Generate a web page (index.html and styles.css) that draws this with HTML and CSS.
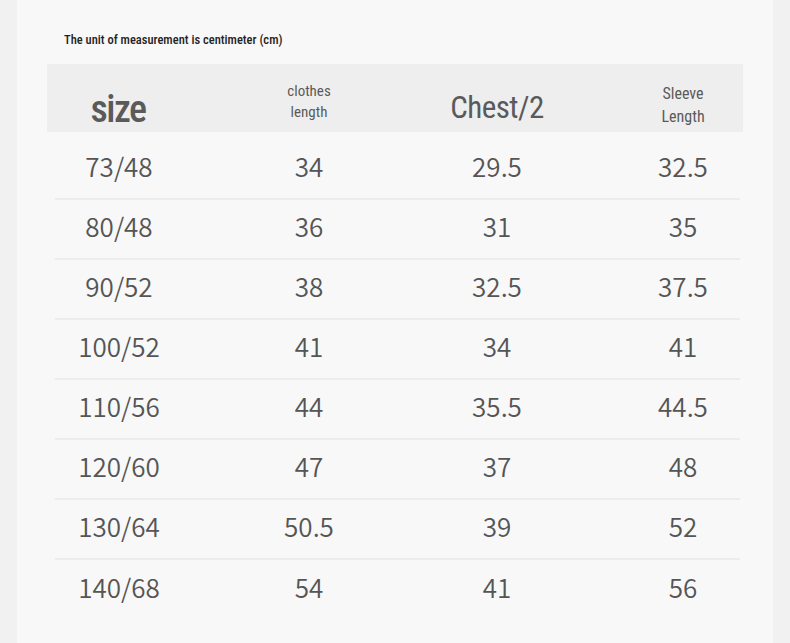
FILE: index.html
```html
<!DOCTYPE html>
<html lang="en">
<head>
<meta charset="utf-8">
<title>Size chart</title>
<link rel="stylesheet" href="styles.css">
</head>
<body>
<div class="panel">
  <p class="caption">The unit of measurement is centimeter (cm)</p>
  <div class="head-band">
    <div class="grid head-grid">
      <div class="hcell h-size">size</div>
      <div class="hcell h-small"><span>clothes</span><span>length</span></div>
      <div class="hcell h-chest">Chest/2</div>
      <div class="hcell h-sleeve"><span>Sleeve</span><span>Length</span></div>
    </div>
  </div>
  <div class="rows">
    <div class="row first"><div class="grid"><span>73/48</span><span>34</span><span>29.5</span><span>32.5</span></div></div>
    <div class="row"><div class="grid"><span>80/48</span><span>36</span><span>31</span><span>35</span></div></div>
    <div class="row"><div class="grid"><span>90/52</span><span>38</span><span>32.5</span><span>37.5</span></div></div>
    <div class="row"><div class="grid"><span>100/52</span><span>41</span><span>34</span><span>41</span></div></div>
    <div class="row"><div class="grid"><span>110/56</span><span>44</span><span>35.5</span><span>44.5</span></div></div>
    <div class="row"><div class="grid"><span>120/60</span><span>47</span><span>37</span><span>48</span></div></div>
    <div class="row"><div class="grid"><span>130/64</span><span>50.5</span><span>39</span><span>52</span></div></div>
    <div class="row last"><div class="grid"><span>140/68</span><span>54</span><span>41</span><span>56</span></div></div>
  </div>
</div>
</body>
</html>
```
FILE: styles.css
```css
html, body {
  margin: 0;
  padding: 0;
}
body {
  background: #f1f1f1;
  width: 790px;
  height: 643px;
  overflow: hidden;
}
.panel {
  margin-left: 17px;
  width: 756px;
  height: 643px;
  background: #f8f8f8;
  padding-top: 1px;
  box-sizing: border-box;
}
.caption {
  margin: 31px 0 0 47px;
  height: 32px;
  font-family: "Roboto Condensed", "DejaVu Sans Condensed", "Liberation Sans Narrow", "DejaVu Sans", sans-serif;
  font-stretch: condensed;
  font-size: 12.5px;
  font-weight: 500;
  line-height: 16px;
  color: #222;
}
.head-band {
  margin-left: 30px;
  width: 696px;
  height: 68px;
  background: #eeeeee;
}
.grid {
  display: grid;
  grid-template-columns: 188px 192px 184px 188px;
  width: 752px;
  height: 100%;
  align-items: center;
  justify-items: center;
  box-sizing: border-box;
}
.head-grid {
  margin-left: -22px;
  font-family: "Roboto Condensed", "DejaVu Sans Condensed", "Liberation Sans Narrow", "DejaVu Sans", sans-serif;
  font-stretch: condensed;
  color: #5a5a5a;
}
.hcell {
  display: flex;
  flex-direction: column;
  align-items: center;
}
.h-size {
  font-size: 38px;
  font-weight: 500;
  letter-spacing: -1.5px;
  line-height: 40px;
  padding-top: 22px;
  padding-right: 2px;
}
.h-small {
  font-size: 15px;
  line-height: 21px;
  padding-top: 8px;
}
.h-chest {
  font-size: 31px;
  font-weight: 400;
  letter-spacing: -0.5px;
  line-height: 34px;
  padding-top: 20px;
}
.h-sleeve {
  font-size: 16px;
  line-height: 23px;
  padding-top: 14px;
}
.rows {
  margin-top: 8px;
}
.row {
  margin: 0 33px 0 38px;
  height: 60px;
  border-bottom: 2px solid #ececec;
  box-sizing: border-box;
}
.row.last {
  border-bottom: none;
}
.row .grid {
  margin-left: -30px;
  padding-bottom: 7px;
  font-family: "Noto Sans CJK SC", "Noto Sans", sans-serif;
  font-size: 26px;
  font-weight: 350;
  color: #555;
}
```
